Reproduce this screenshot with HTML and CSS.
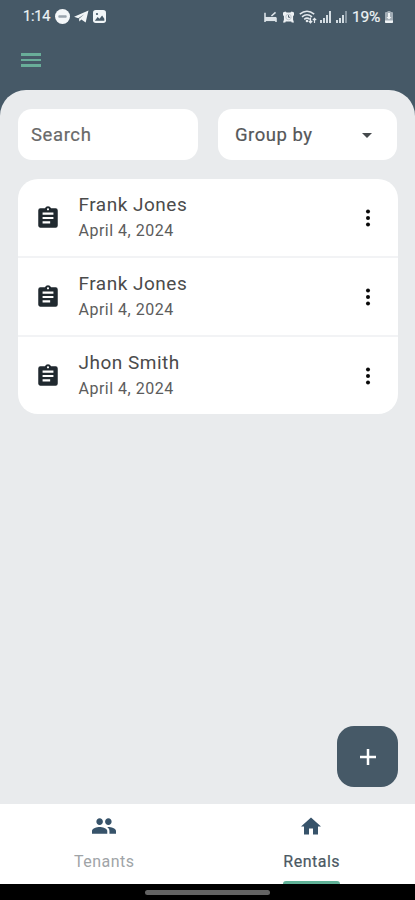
FILE: index.html
```html
<!DOCTYPE html>
<html lang="en">
<head>
<meta charset="utf-8">
<title>Rentals</title>
<link rel="stylesheet" href="styles.css">
</head>
<body>
<svg class="defs" aria-hidden="true">
  <symbol id="clipboard" viewBox="0 0 24 24"><path d="M19 3h-4.200a3 3 0 0 0-5.600 0H5a2 2 0 0 0-2 2v14c0 1.100.9 2 2 2h14a2 2 0 0 0 2-2V5a2 2 0 0 0-2-2zm-7 0a1 1 0 1 1 0 2 1 1 0 0 1 0-2zm2 14H7v-2h7v2zm3-4H7v-2h10v2zm0-4H7V7h10v2z"/></symbol>
  <symbol id="more" viewBox="0 0 24 24"><circle cx="12" cy="5.500" r="2"/><circle cx="12" cy="12" r="2"/><circle cx="12" cy="18.500" r="2"/></symbol>
</svg>
<div class="screen">
  <header class="top">
    <div class="status">
      <div class="status-left">
        <span class="clock">1:14</span>
        <svg class="s-dnd" viewBox="0 0 16 16"><circle cx="8" cy="8" r="8" fill="#f4f7f9"/><rect x="3.500" y="6.700" width="9" height="2.600" rx="1" fill="#9aa5ae"/></svg>
        <svg class="s-plane" viewBox="0 0 16 14"><path d="M0 7.300 15.500.5 12.500 13.500 7.800 10.300 5.700 12.500 5.300 9.500 11 4.500 4.500 8.800z" fill="#f1f5f7"/></svg>
        <svg class="s-photo" viewBox="0 0 14 14"><rect width="14" height="14" rx="3" fill="#f1f5f7"/><circle cx="4.300" cy="4.300" r="1.200" fill="#465967"/><path d="M2 11.500 5 7.500l2 2 2.800-3.700 2.400 3.700v2z" fill="#465967"/></svg>
      </div>
      <div class="status-right">
        <svg class="s-bed" viewBox="0 0 14 12"><path d="M1 2v10M13 12V7M8 5.500l4.500-4" fill="none" stroke="#dce3e8" stroke-width="1.700"/><path d="M1 6.500h12V11H1z" fill="#dce3e8"/></svg>
        <svg class="s-alarm" viewBox="0 0 12 12"><path d="M0 1 2.500 0 4 1h4l1.500-1L12 1v3l-1 1v4l1 3H9.500L9 11H3l-.5 1H0l1-3V5L0 4z" fill="#edf1f4"/><circle cx="6" cy="6" r="3" fill="none" stroke="#a8b3bb" stroke-width=".7"/><path d="M6 4v2.300h1.800" fill="none" stroke="#465967"/></svg>
        <svg class="s-wifi" viewBox="0 0 18 14"><g fill="none" stroke="#e3e9ed" stroke-width="1.500"><path d="M.8 4.200Q8 -1.800 15.200 4.200M3 6.800Q8 2.700 13 6.800M5.200 9.300Q8 7 10.800 9.300"/><path d="M11.500 7.500v5M9.800 11l1.700 1.800 1.700-1.800M15.500 13V8.500m-1.700 1.600 1.700-1.700 1.700 1.700" stroke-width="1.200"/></g><circle cx="8" cy="11" r="1.300" fill="#e3e9ed"/></svg>
        <svg class="s-signal" viewBox="0 0 12 12"><path d="M0 9h2v3H0zM3 7h2v5H3zM6 4h2v8H6zM9 0h2v12H9z" fill="#d3dce2"/></svg>
        <svg class="s-signal" viewBox="0 0 12 12"><path d="M0 9h2v3H0zM3 7h2v5H3zM6 4h2v8H6z" fill="#d3dce2"/><path d="M9 0h2v12H9z" fill="#8796a1"/></svg>
        <span class="percent">19%</span>
        <svg class="s-battery" viewBox="0 0 8 12"><path d="M2.500 0h3v1H7q1 0 1 1v9q0 1-1 1H1q-1 0-1-1V2q0-1 1-1h1.500z" fill="#a2adb6"/><path d="M3 2h2v4h1.500L4 8.500 1.500 6H3zM0 9.500h8V11q0 1-1 1H1q-1 0-1-1z" fill="#f0f4f6"/></svg>
      </div>
    </div>
    <div class="menu"><i></i><i></i><i></i></div>
  </header>
  <main class="sheet">
    <div class="filters">
      <div class="field search">Search</div>
      <div class="field group"><span>Group by</span><i class="caret"></i></div>
    </div>
    <div class="list">
      <div class="row">
        <svg class="doc"><use href="#clipboard"/></svg>
        <div class="info"><div class="name">Frank Jones</div><div class="date">April 4, 2024</div></div>
        <svg class="dots"><use href="#more"/></svg>
      </div>
      <div class="row">
        <svg class="doc"><use href="#clipboard"/></svg>
        <div class="info"><div class="name">Frank Jones</div><div class="date">April 4, 2024</div></div>
        <svg class="dots"><use href="#more"/></svg>
      </div>
      <div class="row">
        <svg class="doc"><use href="#clipboard"/></svg>
        <div class="info"><div class="name">Jhon Smith</div><div class="date">April 4, 2024</div></div>
        <svg class="dots"><use href="#more"/></svg>
      </div>
    </div>
    <div class="fab"><svg viewBox="0 0 16 16"><path d="M8 0v16M0 8h16" stroke="#fff" stroke-width="2.500"/></svg></div>
  </main>
  <nav class="tabs">
    <div class="tab">
      <svg class="people" viewBox="1 5 22 14"><path d="M16 11c1.660 0 2.990-1.340 2.990-3S17.660 5 16 5s-3 1.340-3 3 1.340 3 3 3zm-8 0c1.660 0 2.990-1.340 2.990-3S9.660 5 8 5 5 6.340 5 8s1.340 3 3 3zm0 2c-2.330 0-7 1.170-7 3.500V19h14v-2.500c0-2.330-4.670-3.500-7-3.500zm8 0c-.29 0-.62.020-.97.050 1.160.84 1.970 1.970 1.970 3.450V19h6v-2.500c0-2.330-4.670-3.500-7-3.500z"/></svg>
      <span class="label">Tenants</span>
    </div>
    <div class="tab active">
      <svg class="home" viewBox="2 3 20 17"><path d="M10 20v-6h4v6h5v-8h3L12 3 2 12h3v8z"/></svg>
      <span class="label">Rentals</span>
      <i class="marker"></i>
    </div>
  </nav>
  <footer class="system"><i class="handle"></i></footer>
</div>
</body>
</html>
```
FILE: styles.css
```css
* { box-sizing: border-box; }
body { margin: 0; background: #465967; font-family: Roboto, "Liberation Sans", sans-serif; }
svg { display: block; flex: none; }
i { display: block; }
.defs { position: absolute; width: 0; height: 0; }
.screen { width: 415px; height: 900px; display: flex; flex-direction: column; overflow: hidden; }

.top { height: 90px; flex: none; }
.status { height: 33px; padding: 0 22px 0 23px; display: flex; justify-content: space-between; align-items: center; color: #edf2f5; }
.status-left, .status-right { display: flex; align-items: center; }
.clock { width: 28px; margin-right: 4px; font-size: 14.500px; letter-spacing: -.2px; white-space: nowrap; -webkit-text-stroke: .2px; }
.s-dnd { width: 15px; height: 15px; margin-right: 4px; }
.s-plane { width: 15px; height: 13px; margin-right: 4px; }
.s-photo { width: 13px; height: 13px; }
.s-bed { width: 13px; height: 11px; margin-right: 6px; }
.s-alarm { width: 11px; height: 12px; margin-right: 5px; }
.s-wifi { width: 18px; height: 14px; margin-right: 3px; }
.s-signal { width: 12px; height: 12px; margin-right: 4px; }
.percent { width: 31px; margin-right: 2px; font-size: 15.500px; letter-spacing: -.2px; white-space: nowrap; -webkit-text-stroke: .2px; }
.s-battery { width: 8px; height: 12px; }
.menu { width: 20px; margin: 20px 0 0 21px; display: flex; flex-direction: column; gap: 3px; }
.menu i { height: 2.600px; background: #69ad99; }

.sheet { position: relative; flex: 1; padding: 19px 17px 0 18px; background: #e9ebed; border-radius: 26px 26px 0 0; }
.filters { display: grid; grid-template-columns: 180px 179px; gap: 20px; margin-bottom: 19px; }
.field { height: 51px; border-radius: 14px; background: #fff; display: flex; align-items: center; font-size: 18.500px; letter-spacing: .6px; white-space: nowrap; -webkit-text-stroke: .2px; }
.search { padding-left: 13px; color: #696969; }
.group { padding: 0 25px 0 17px; justify-content: space-between; color: #555759; letter-spacing: .5px; }
.caret { border: 5px solid transparent; border-top-color: #45494c; border-bottom: 0; margin-top: 1px; }

.list { background: #fff; border-radius: 20px; overflow: hidden; }
.row { height: 79px; display: flex; align-items: center; border-bottom: 2px solid #f2f3f5; }
.row:last-child { height: 77px; border-bottom: 0; }
.doc { width: 26px; height: 26px; margin-left: 17px; fill: #20292f; }
.info { flex: 1; margin-left: 17.500px; padding-top: 1px; }
.name { font-size: 19px; line-height: 26px; letter-spacing: .5px; color: #4b4b4b; }
.date { font-size: 16px; line-height: 26px; letter-spacing: .5px; color: #5c5c5c; }
.dots { width: 24px; height: 24px; margin-right: 18px; fill: #090909; }

.fab { position: absolute; right: 17px; bottom: 17px; width: 61px; height: 61px; border-radius: 17px; background: #465967; display: grid; place-items: center; }
.fab svg { width: 16px; height: 16px; }

.tabs { height: 80px; flex: none; display: flex; background: #fff; }
.tab { flex: 1; position: relative; display: flex; flex-direction: column; align-items: center; color: #a0a4a7; }
.tab svg { fill: #37536a; }
.people { width: 24px; height: 16px; margin-top: 14px; }
.home { width: 20px; height: 18px; margin-top: 13px; }
.label { margin-top: 18px; padding-left: 1px; font-size: 16px; line-height: 20px; letter-spacing: .5px; }
.active { color: #4b5963; }
.active .label { margin-top: 17px; -webkit-text-stroke: .2px; }
.marker { position: absolute; bottom: 0; width: 57px; height: 3px; border-radius: 3px 3px 0 0; background: #60b197; }
.system { height: 16px; flex: none; background: #000; display: flex; justify-content: center; padding-top: 6px; }
.handle { width: 125px; height: 5px; border-radius: 3px; background: #636363; }
```
